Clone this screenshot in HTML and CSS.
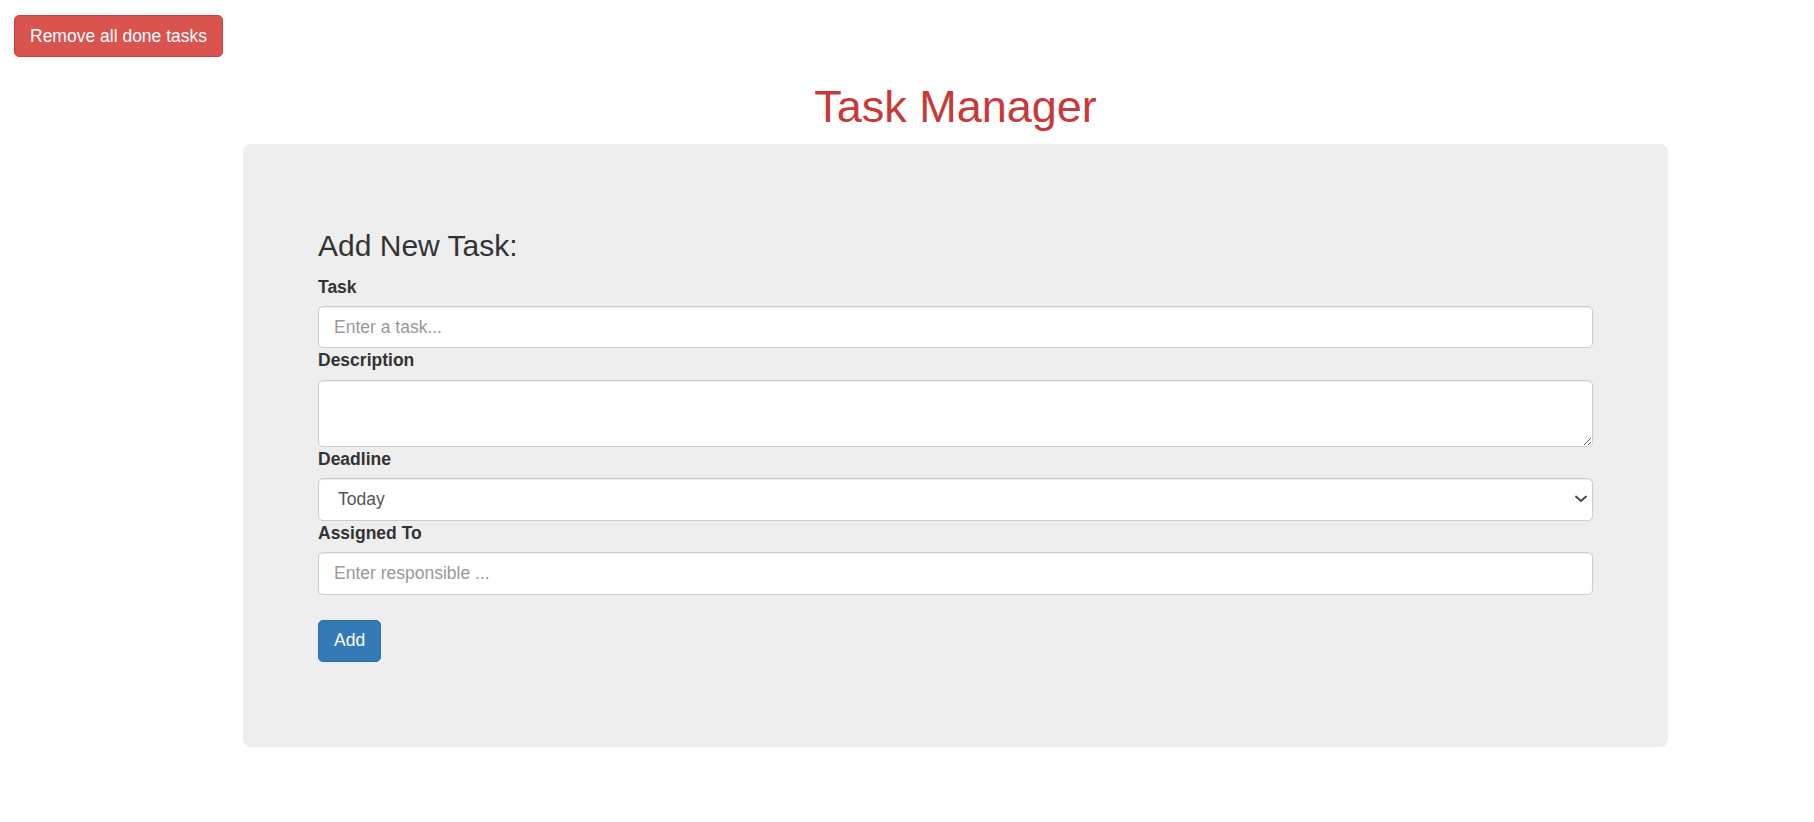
FILE: index.html
```html
<!DOCTYPE html>
<html lang="en">
<head>
<meta charset="utf-8">
<title>Task Manager</title>
<link rel="stylesheet" href="styles.css">
</head>
<body>
  <div class="toolbar">
    <button class="btn btn-danger" type="button">Remove all done tasks</button>
  </div>
  <div class="page">
    <h1 class="title">Task Manager</h1>
    <div class="panel">
      <h3 class="panel-heading">Add New Task:</h3>
      <form class="task-form">
        <label class="field-label" for="task">Task</label>
        <input class="field" id="task" type="text" placeholder="Enter a task...">
        <label class="field-label" for="desc">Description</label>
        <textarea class="field field-area" id="desc" rows="2"></textarea>
        <label class="field-label" for="deadline">Deadline</label>
        <div class="select-wrap">
          <select class="field field-select" id="deadline">
            <option>Today</option>
            <option>Tomorrow</option>
            <option>This week</option>
          </select>
          <svg class="select-arrow" width="12" height="8" viewBox="0 0 12 8" aria-hidden="true">
            <path d="M1 1.5 L6 6 L11 1.5" fill="none" stroke="#444" stroke-width="1.8" stroke-linecap="round" stroke-linejoin="round"/>
          </svg>
        </div>
        <label class="field-label" for="assigned">Assigned To</label>
        <input class="field" id="assigned" type="text" placeholder="Enter responsible ...">
        <button class="btn btn-primary add-btn" type="button">Add</button>
      </form>
    </div>
  </div>
</body>
</html>
```
FILE: styles.css
```css
html, body {
  margin: 0;
  padding: 0;
  background: #fff;
}

body {
  font-family: "Liberation Sans", Arial, Helvetica, sans-serif;
  font-size: 17.5px;
  line-height: 25px;
  color: #333;
}

.toolbar {
  padding: 15px 0 0 14px;
}

.btn {
  display: inline-block;
  font-family: inherit;
  font-size: 17.5px;
  line-height: 25px;
  padding: 7.5px 15px;
  border: 1px solid transparent;
  border-radius: 5px;
  cursor: pointer;
  color: #fff;
}

.btn-danger {
  background: #d9534f;
  border-color: #d43f3a;
}

.btn-primary {
  background: #337ab7;
  border-color: #2e6da4;
}

.page {
  margin-left: 243px;
  width: 1425px;
}

.title {
  margin: 25px 0 12.5px;
  font-size: 45px;
  line-height: 49.5px;
  font-weight: 500;
  text-align: center;
  color: #c63a3a;
}

.panel {
  box-sizing: border-box;
  background: #eee;
  border-radius: 7.5px;
  padding: 60px 75px;
  min-height: 602px;
}

.panel-heading {
  margin: 25px 0 12.5px;
  font-size: 30px;
  line-height: 33px;
  font-weight: 500;
  color: #333;
}

.task-form {
  display: flex;
  flex-direction: column;
  align-items: stretch;
}

.field-label {
  display: block;
  font-weight: bold;
  margin-bottom: 6.25px;
}

.field {
  display: block;
  box-sizing: border-box;
  width: 100%;
  height: 42.5px;
  margin: 0;
  padding: 7.5px 15px;
  font-family: inherit;
  font-size: 17.5px;
  line-height: 25px;
  color: #555;
  background: #fff;
  border: 1px solid #ccc;
  border-radius: 5px;
  box-shadow: inset 0 1px 1px rgba(0, 0, 0, 0.075);
}

.field::placeholder {
  color: #999;
}

.field-area {
  height: 67.5px;
  resize: vertical;
}

.select-wrap {
  position: relative;
}

.field-select {
  appearance: none;
  -webkit-appearance: none;
  padding-left: 19px;
  padding-right: 30px;
}

.select-arrow {
  position: absolute;
  right: 6px;
  top: 17px;
  pointer-events: none;
}

.add-btn {
  align-self: flex-start;
  margin-top: 25px;
  margin-bottom: 25px;
}
```
